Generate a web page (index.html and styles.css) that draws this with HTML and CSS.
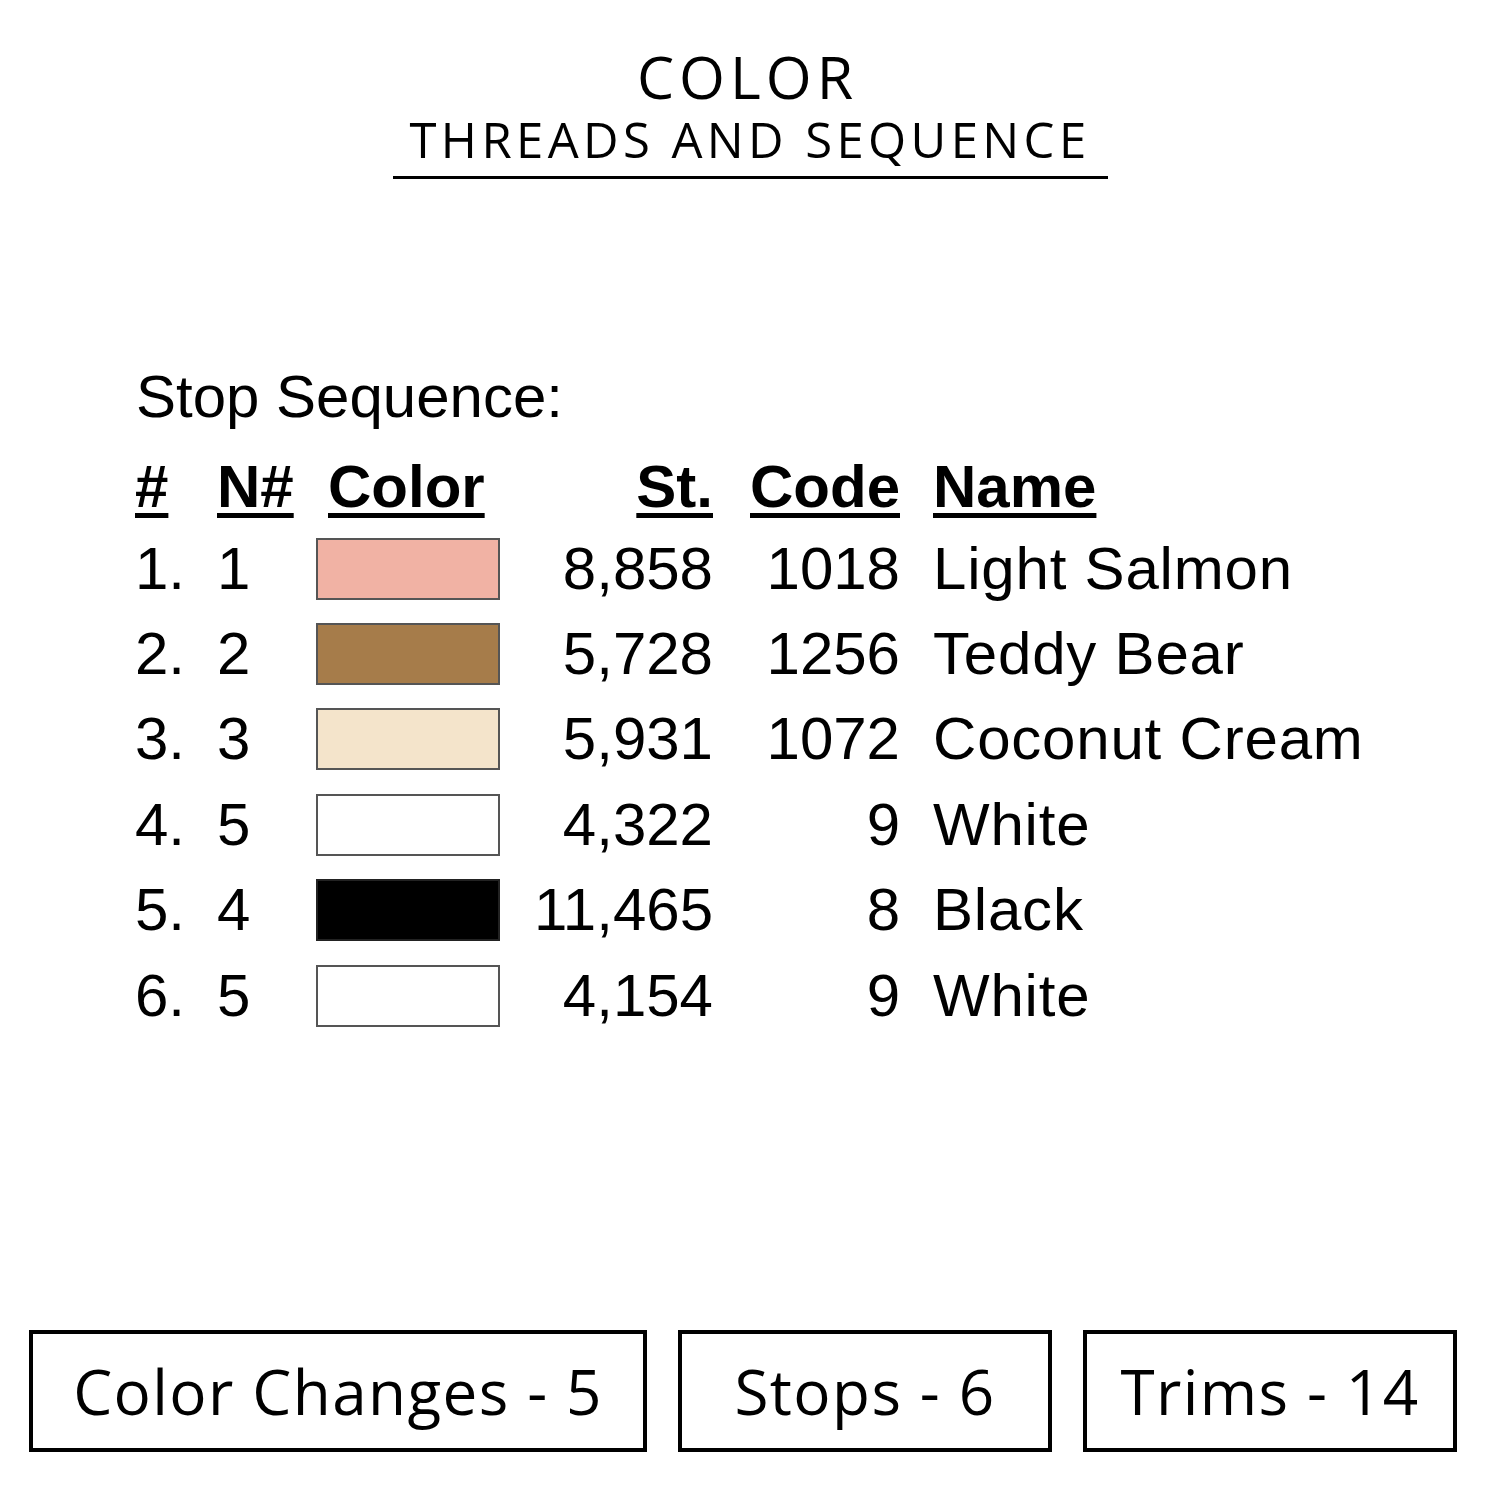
FILE: index.html
```html
<!DOCTYPE html>
<html>
<head>
<meta charset="utf-8">
<link rel="stylesheet" href="styles.css">
</head>
<body>
<div class="page">
  <header class="title">
    <div class="title-main">COLOR</div>
    <div class="title-sub">THREADS AND SEQUENCE</div>
  </header>

  <section class="sequence">
    <div class="seq-label">Stop Sequence:</div>
    <div class="seq-grid">
      <div class="hd"><span>#</span></div>
      <div class="hd"><span>N#</span></div>
      <div class="hd hd-color"><span>Color</span></div>
      <div class="hd num"><span>St.</span></div>
      <div class="hd num"><span>Code</span></div>
      <div class="hd name"><span>Name</span></div>

      <div>1.</div><div>1</div><div><div class="sw sw-salmon"></div></div><div class="num">8,858</div><div class="num">1018</div><div class="name">Light Salmon</div>
      <div>2.</div><div>2</div><div><div class="sw sw-teddy"></div></div><div class="num">5,728</div><div class="num">1256</div><div class="name">Teddy Bear</div>
      <div>3.</div><div>3</div><div><div class="sw sw-coconut"></div></div><div class="num">5,931</div><div class="num">1072</div><div class="name">Coconut Cream</div>
      <div>4.</div><div>5</div><div><div class="sw sw-white"></div></div><div class="num">4,322</div><div class="num">9</div><div class="name">White</div>
      <div>5.</div><div>4</div><div><div class="sw sw-black"></div></div><div class="num">11,465</div><div class="num">8</div><div class="name">Black</div>
      <div>6.</div><div>5</div><div><div class="sw sw-white"></div></div><div class="num">4,154</div><div class="num">9</div><div class="name">White</div>
    </div>
  </section>

  <footer class="stats">
    <div class="stat stat-wide">Color Changes - 5</div>
    <div class="stat">Stops - 6</div>
    <div class="stat">Trims - 14</div>
  </footer>
</div>
</body>
</html>
```

FILE: styles.css
```css
html, body {
  margin: 0;
  padding: 0;
  background: #fff;
}

.page {
  width: 1500px;
  height: 1500px;
  display: flex;
  flex-direction: column;
  color: #000;
}

.title {
  display: flex;
  flex-direction: column;
  align-items: center;
  margin-top: 47px;
}

.title-main {
  font-family: "Open Sans", sans-serif;
  font-size: 59px;
  line-height: 59px;
  font-weight: 400;
  letter-spacing: 5px;
  padding-left: 5px;
  margin-left: -10px;
}

.title-sub {
  font-family: "Open Sans", sans-serif;
  font-size: 49px;
  line-height: 50px;
  font-weight: 400;
  letter-spacing: 4.4px;
  width: 715px;
  text-align: center;
  border-bottom: 3px solid #000;
  padding-bottom: 12px;
  margin-top: 8px;
}

.sequence {
  font-family: "Liberation Sans", Arial, sans-serif;
  font-size: 60px;
  padding-left: 136px;
  margin-top: 188px;
}

.seq-label {
  line-height: 60px;
}

.seq-grid {
  display: grid;
  grid-template-columns: 82px 99px 184px 213px 187px auto;
  grid-template-rows: 79px;
  grid-auto-rows: 85.4px;
  align-items: center;
  margin-top: 20px;
  line-height: 60px;
  margin-left: -1px;
}

.hd {
  font-weight: 700;
}

.hd span {
  text-decoration: underline;
  text-decoration-thickness: 5px;
  text-underline-offset: 6px;
}

.hd-color {
  padding-left: 12px;
}

.num {
  text-align: right;
}

.name {
  padding-left: 33px;
  letter-spacing: 0.8px;
}

.hd.name {
  letter-spacing: 0;
}

.sw {
  width: 180px;
  height: 58px;
  border: 2px solid #555;
}

.sw-salmon { background: #f1b2a4; }
.sw-teddy { background: #a67c4a; }
.sw-coconut { background: #f4e4cb; }
.sw-white { background: #fff; }
.sw-black { background: #000; border-color: #222; }

.stats {
  display: flex;
  gap: 31px;
  padding-left: 29px;
  margin-top: auto;
  margin-bottom: 48px;
}

.stat {
  box-sizing: border-box;
  width: 374px;
  height: 122px;
  border: 4px solid #000;
  display: flex;
  align-items: center;
  justify-content: center;
  font-family: "Open Sans", sans-serif;
  font-size: 62px;
  letter-spacing: 1.4px;
}

.stat-wide {
  width: 618px;
}
```
